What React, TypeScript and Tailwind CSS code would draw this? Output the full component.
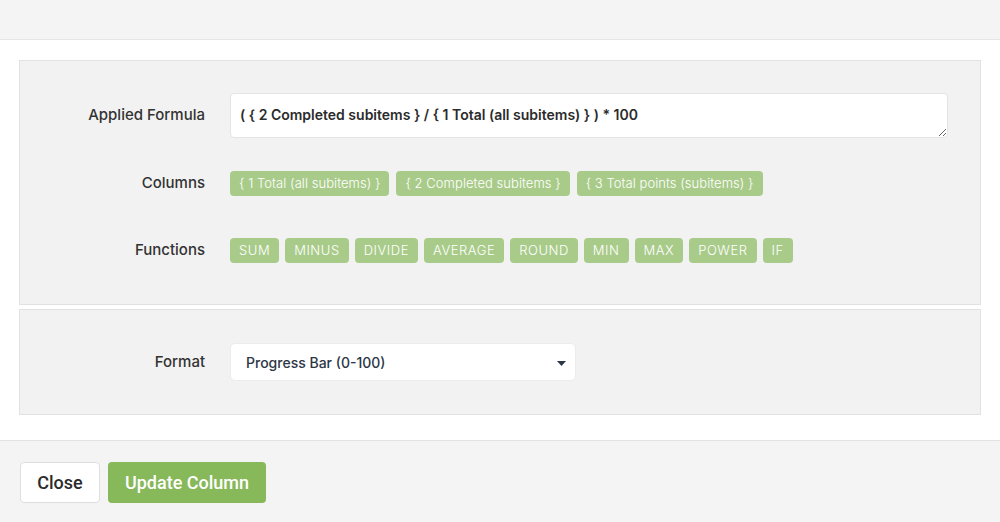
const columns = ["{ 1 Total (all subitems) }", "{ 2 Completed subitems }", "{ 3 Total points (subitems) }"]
const functions = ["SUM", "MINUS", "DIVIDE", "AVERAGE", "ROUND", "MIN", "MAX", "POWER", "IF"]

const font = "font-['Inter','Open_Sans',sans-serif]"

function Chip({ label, caps }: { label: string; caps?: boolean }) {
  return (
    <span
      className={`inline-flex h-[25px] items-center rounded-[4px] bg-[#a9cb8a] px-[9px] text-[13px] font-light text-white ${
        caps ? "tracking-[0.55px]" : "tracking-[0.05px]"
      }`}
    >
      {label}
    </span>
  )
}

export default function App() {
  return (
    <div className={`flex h-[522px] w-[1000px] flex-col bg-white ${font}`}>
      {/* Modal header (empty) */}
      <div className="h-[40px] shrink-0 border-b border-[#e6e6e6] bg-[#f4f4f4]" />

      {/* Body */}
      <div className="flex flex-col gap-[4px] px-[19px] pt-[20px]">
        <div className="border border-[#e2e2e2] bg-[#f2f2f2] pb-[41px] pr-[32px] pt-[32px]">
          <div className="grid grid-cols-[185px_1fr] items-center gap-x-[25px]">
            <label className="text-right text-[15px] font-medium text-[#333]">Applied Formula</label>
            <textarea
              readOnly
              value="( { 2 Completed subitems } / { 1 Total (all subitems) } ) * 100"
              className="block h-[45px] w-full resize-y rounded-[4px] border border-[#e4e4e4] bg-white px-[9px] pt-[11px] text-[14px] font-semibold leading-[20px] text-[#2b2b2b] outline-none"
            />

            <label className="mt-[33px] text-right text-[15px] font-medium text-[#333]">Columns</label>
            <div className="mt-[33px] flex gap-[7px]">
              {columns.map((c) => (
                <Chip key={c} label={c} />
              ))}
            </div>

            <label className="mt-[42px] text-right text-[15px] font-medium text-[#333]">Functions</label>
            <div className="mt-[42px] flex gap-[6px]">
              {functions.map((f) => (
                <Chip key={f} label={f} caps />
              ))}
            </div>
          </div>
        </div>

        <div className="border border-[#e2e2e2] bg-[#f2f2f2] py-[33px] pr-[32px]">
          <div className="grid grid-cols-[185px_1fr] items-center gap-x-[25px]">
            <label className="text-right text-[15px] font-medium text-[#333]">Format</label>
            <div className="relative flex h-[38px] w-[346px] items-center rounded-[5px] border border-[#ececec] bg-white pl-[15px] text-[14px] font-medium text-[#2c3646]">
              Progress Bar (0-100)
              {/* caret */}
              <svg className="absolute right-[9px] top-[17px]" width="9" height="5" viewBox="0 0 9 5">
                <path d="M0 0 L9 0 L4.5 5 Z" fill="#2c3646" />
              </svg>
            </div>
          </div>
        </div>
      </div>

      {/* Footer */}
      <div className="mt-auto flex h-[82px] shrink-0 items-start gap-[8px] border-t border-[#e3e3e3] bg-[#f4f4f4] px-[20px] pt-[21px] font-['Roboto','Liberation_Sans',Arial,sans-serif]">
        <button className="h-[41px] w-[80px] rounded-[4px] border border-[#dedede] bg-white text-[18px] font-medium text-[#2b2b2b]">
          Close
        </button>
        <button className="h-[41px] w-[158px] rounded-[4px] bg-[#87b85a] text-[18px] font-medium text-white">
          Update Column
        </button>
      </div>
    </div>
  )
}
